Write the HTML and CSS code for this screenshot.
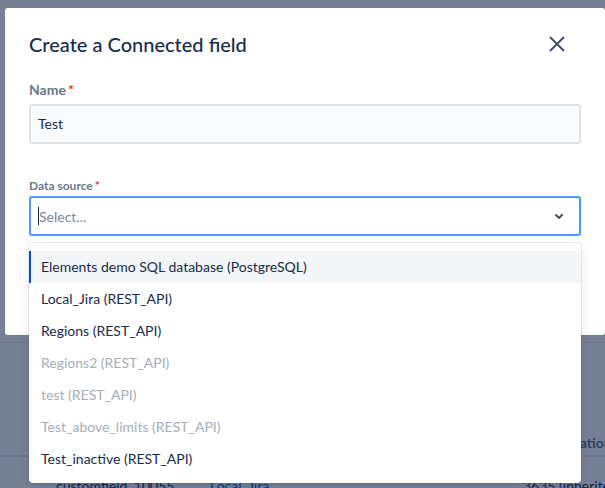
FILE: index.html
```html
<!doctype html>
<html>
<head>
<meta charset="utf-8">
<link rel="stylesheet" href="styles.css">
<title>Create a Connected field</title>
</head>
<body>
<div class="page">
  <div class="page-top"></div>
  <div class="table">
    <div class="table-head">
      <span class="col-name">Name</span>
      <span class="col-source">Data source</span>
      <span class="col-loc">Location</span>
    </div>
    <div class="table-row">
      <span class="col-name">customfield_10055</span>
      <span class="col-source link">Local_Jira</span>
      <span class="col-loc">3635 (inherited)</span>
    </div>
  </div>
</div>

<div class="blanket"></div>

<div class="modal">
  <div class="modal-header">
    <h4 class="modal-title">Create a Connected field</h4>
    <button class="close-btn" aria-label="Close">
      <svg width="24" height="24" viewBox="0 0 24 24"><path d="M5 5 L19 19 M19 5 L5 19" stroke="#42526E" stroke-width="2" fill="none"/></svg>
    </button>
  </div>
  <div class="modal-body">
    <label class="label">Name<span class="req">*</span></label>
    <div class="text-field">Test</div>

    <label class="label label-small">Data source<span class="req">*</span></label>
    <div class="select-wrap">
      <div class="select">
        <span class="caret"></span>
        <span class="placeholder">Select...</span>
        <svg class="chevron" width="24" height="24" viewBox="0 0 24 24"><path d="M8.3 10.3a1 1 0 0 1 1.4 0L12 12.6l2.3-2.3a1 1 0 1 1 1.4 1.4l-3 3a1 1 0 0 1-1.4 0l-3-3a1 1 0 0 1 0-1.4z" fill="#42526E"/></svg>
      </div>
      <div class="menu">
        <div class="option active">Elements demo SQL database (PostgreSQL)</div>
        <div class="option">Local_Jira (REST_API)</div>
        <div class="option">Regions (REST_API)</div>
        <div class="option disabled">Regions2 (REST_API)</div>
        <div class="option disabled">test (REST_API)</div>
        <div class="option disabled">Test_above_limits (REST_API)</div>
        <div class="option">Test_inactive (REST_API)</div>
      </div>
    </div>
  </div>
</div>
</body>
</html>
```

FILE: styles.css
```css
* {
    box-sizing: border-box;
}
body {
    margin: 0;
    width: 605px;
    height: 488px;
    overflow: hidden;
    position: relative;
    font-family: Lato, "Noto Sans", sans-serif;
    font-size: 14px;
    color: #172B4D;
    background-color: #f4f5f7;
}
.page {
    width: 700px;
}
.page-top {
    height: 343px;
    border-bottom: 1px solid #dfe1e6;
}
.table {
    padding-top: 87px;
}
.table-head,
.table-row {
    display: flex;
    white-space: nowrap;
    padding-left: 56px;
}
.table-head {
    height: 27px;
    align-items: center;
    border-bottom: 2px solid #dfe1e6;
    color: #5e6c84;
    font-weight: 700;
    font-size: 14px;
}
.table-row {
    height: 52px;
    padding-top: 20px;
    line-height: 18px;
}
.col-name {
    width: 154px;
}
.col-source {
    width: 313px;
}
.table-head .col-loc {
    padding-left: 35px;
}
.link {
    color: #0052cc;
}

.blanket {
    position: absolute;
    inset: 0;
    background-color: rgba(9, 30, 66, 0.54);
}

.modal {
    position: absolute;
    left: 5px;
    top: 8px;
    width: 600px;
    height: 327px;
    background-color: white;
    border-radius: 3px;
}
.modal-header {
    display: flex;
    align-items: center;
    justify-content: space-between;
    padding: 24px 24px 0 24px;
}
.modal-title {
    margin: 0;
    font-size: 20px;
    line-height: 24px;
    font-weight: 500;
    color: #172B4D;
}
.close-btn {
    border: none;
    background: none;
    padding: 0;
    margin-right: 12px;
    width: 24px;
    height: 24px;
}
.close-btn svg {
    display: block;
}
.modal-body {
    padding: 26px 24px 0 24px;
}
.label {
    display: block;
    font-size: 14px;
    line-height: 16px;
    font-weight: 700;
    color: #6B778C;
    margin-bottom: 6px;
}
.label-small {
    font-size: 12px;
    margin-top: 34px;
    margin-bottom: 2px;
}
.req {
    color: #DE350B;
    padding-left: 2px;
}
.text-field {
    height: 40px;
    border: 2px solid #DFE1E6;
    border-radius: 3px;
    background-color: #FAFBFC;
    padding: 0 7px;
    line-height: 36px;
    color: #172B4D;
}
.select-wrap {
    position: relative;
}
.select {
    height: 40px;
    border: 2px solid #4C9AFF;
    border-radius: 3px;
    background-color: white;
    display: flex;
    align-items: center;
    padding: 0 8px 0 7px;
}
.caret {
    width: 1px;
    height: 18px;
    background-color: #172B4D;
}
.placeholder {
    flex: 1;
    color: #7A869A;
}
.menu {
    position: absolute;
    left: 0;
    right: 0;
    top: 47px;
    background-color: white;
    border-radius: 4px;
    padding: 8px 0;
    box-shadow: 0 0 0 1px rgba(9, 30, 66, 0.08), 0 4px 11px rgba(9, 30, 66, 0.1);
}
.option {
    height: 32px;
    line-height: 32px;
    padding-left: 12px;
    color: #172B4D;
}
.option.active {
    background-color: #F4F5F7;
    box-shadow: inset 2px 0 0 #0052CC;
}
.option.disabled {
    color: #A5ADBA;
}
```
